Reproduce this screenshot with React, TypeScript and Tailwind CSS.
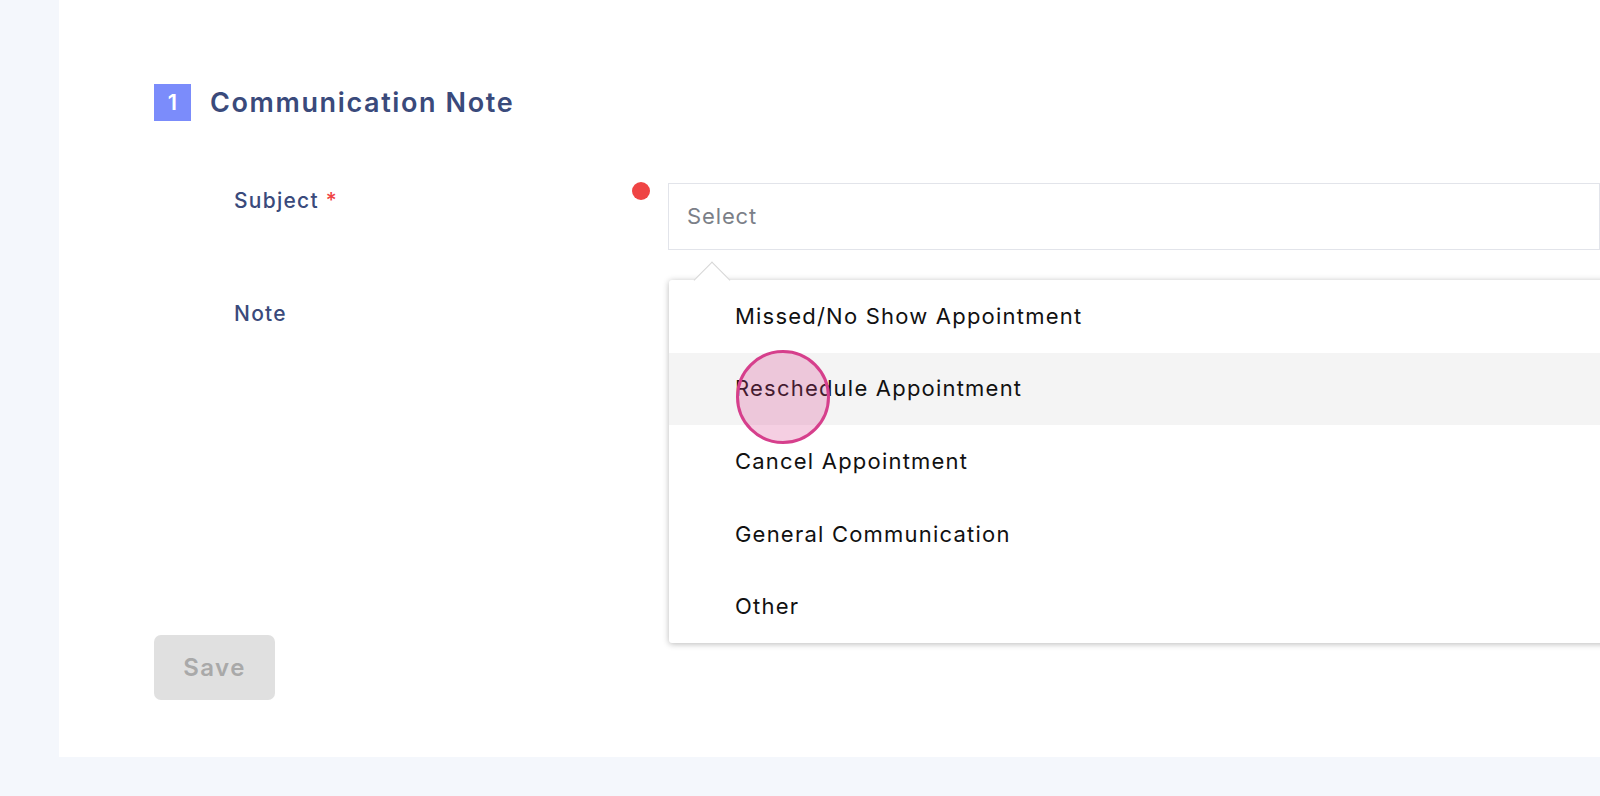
const options = [
  'Missed/No Show Appointment',
  'Reschedule Appointment',
  'Cancel Appointment',
  'General Communication',
  'Other',
];

export default function App() {
  const hovered = 1;

  return (
    <div
      className="h-[796px] w-full overflow-hidden bg-[#f4f7fc] pl-[59px]"
      style={{ fontFamily: 'Inter, "Noto Sans", sans-serif' }}
    >
      <div className="relative h-[757px] bg-white pl-[95px] pt-[84px]">
        {/* Section header */}
        <div className="flex h-[37px] items-center gap-[19px]">
          <div className="flex h-[37px] w-[37px] items-center justify-center bg-[#7b8cfb] text-[22px] font-semibold text-white">
            1
          </div>
          <h2 className="text-[27px] font-semibold leading-none tracking-[0.06em] text-[#3a4a7b]">Communication Note</h2>
        </div>

        {/* Form */}
        <div className="mt-[62px] flex flex-col">
          <div className="flex h-[112px]">
            <div className="w-[514px] pl-[80px] pt-[3px] text-[21px] font-medium leading-[30px] tracking-[0.06em] text-[#3a4a7b]">
              Subject <span className="text-[#ef4444]">*</span>
            </div>
            <div className="relative flex-1">
              <span className="absolute left-[-36px] top-[-1px] h-[18px] w-[18px] rounded-full bg-[#ef4444]" />
              <div className="flex h-[67px] items-center border border-[#e2e4ea] pl-[18px] text-[22px] tracking-[0.04em] text-[#7b7f88]">
                Select
              </div>

              {/* Dropdown */}
              <div className="absolute left-[1px] right-[-20px] top-[97px] z-10 rounded-[3px] bg-white shadow-[0_1px_6px_rgba(0,0,0,0.28)]">
                <div className="absolute left-[30px] top-[-13px] h-[26px] w-[26px] rotate-45 border-l border-t border-[#d6d6d6] bg-white" />
                <ul className="relative">
                  {options.map((o, i) => (
                    <li
                      key={o}
                      className={`flex h-[72.6px] items-center pl-[66px] text-[22px] tracking-[0.055em] text-[#111] ${
                        i === hovered ? 'bg-[#f4f4f4]' : ''
                      }`}
                    >
                      {o}
                    </li>
                  ))}
                </ul>
              </div>
            </div>
          </div>
          <div className="w-[514px] pl-[80px] pt-[4px] text-[21px] font-medium leading-[30px] tracking-[0.06em] text-[#3a4a7b]">
            Note
          </div>
        </div>

        <button className="absolute left-[95px] top-[635px] h-[65px] w-[121px] rounded-[7px] bg-[#e0e0e0] text-[24px] font-semibold tracking-[0.06em] text-[#a9a9a9]">
          Save
        </button>

        {/* click indicator */}
        <div className="absolute left-[677px] top-[350px] z-20 h-[94px] w-[94px] rounded-full border-[3px] border-[#d63f8c] bg-[rgba(214,63,140,0.25)]" />
      </div>
    </div>
  );
}
